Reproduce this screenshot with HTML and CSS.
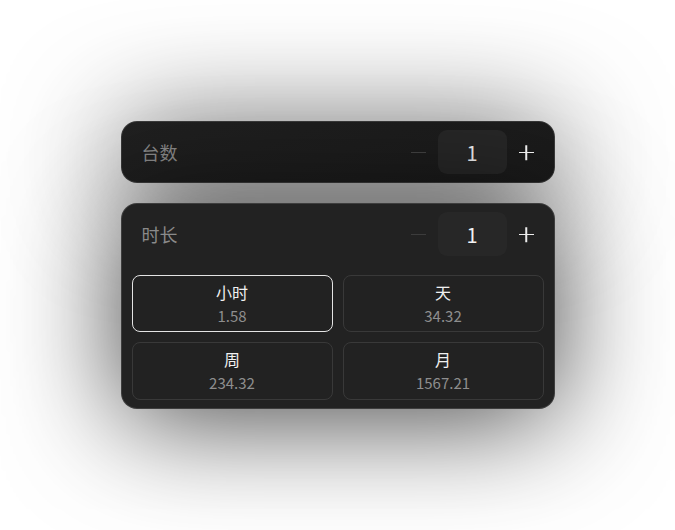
FILE: index.html
```html
<!DOCTYPE html>
<html lang="zh-CN">
<head>
<meta charset="utf-8">
<title>时长选择</title>
<link rel="stylesheet" href="styles.css">
</head>
<body>
<main class="stack">
  <section class="card card-count">
    <div class="row">
      <span class="label">台数</span>
      <div class="stepper">
        <span class="btn minus" aria-label="减少"></span>
        <span class="value">1</span>
        <span class="btn plus" aria-label="增加"></span>
      </div>
    </div>
  </section>
  <section class="card card-duration">
    <div class="row">
      <span class="label">时长</span>
      <div class="stepper">
        <span class="btn minus" aria-label="减少"></span>
        <span class="value">1</span>
        <span class="btn plus" aria-label="增加"></span>
      </div>
    </div>
    <div class="options">
      <div class="option selected"><span class="opt-title">小时</span><span class="opt-price">1.58</span></div>
      <div class="option"><span class="opt-title">天</span><span class="opt-price">34.32</span></div>
      <div class="option"><span class="opt-title">周</span><span class="opt-price">234.32</span></div>
      <div class="option"><span class="opt-title">月</span><span class="opt-price">1567.21</span></div>
    </div>
  </section>
</main>
</body>
</html>
```

FILE: styles.css
```css
html, body {
  margin: 0;
  height: 100%;
  background: #ffffff;
}
body {
  display: flex;
  align-items: center;
  justify-content: center;
  font-family: "Noto Sans CJK SC", "Noto Sans", sans-serif;
}
.stack {
  width: 434px;
  display: flex;
  flex-direction: column;
  gap: 20px;
}
.card {
  box-sizing: border-box;
  border-radius: 16px;
  border: 1px solid rgba(255, 255, 255, 0.13);
  box-shadow: 0 10px 115px rgba(0, 0, 0, 0.75);
}
.card-count {
  background: linear-gradient(160deg, #202020, #1a1a1a);
  padding: 8px 20px;
}
.card-duration {
  background: #222222;
  padding: 8px 10px;
}
.card-duration .row {
  padding: 0 10px;
}
.row {
  display: flex;
  align-items: center;
  height: 44px;
}
.label {
  flex: 1;
  font-size: 18px;
  color: #8a8a8a;
  line-height: 1;
}
.stepper {
  display: flex;
  align-items: center;
  gap: 12px;
}
.btn {
  position: relative;
  width: 15px;
  height: 15px;
}
.btn::before,
.btn::after {
  content: "";
  position: absolute;
  left: 0;
  top: 7px;
  width: 15px;
  height: 1.5px;
}
.minus::before {
  background: #3c3c3c;
}
.plus::before,
.plus::after {
  background: #ececec;
}
.plus::after {
  transform: rotate(90deg);
}
.value {
  width: 69px;
  height: 44px;
  border-radius: 9px;
  background: #272727;
  color: #f2f2f2;
  font-size: 20px;
  display: flex;
  align-items: center;
  justify-content: center;
}
.options {
  margin-top: 19px;
  display: grid;
  grid-template-columns: 1fr 1fr;
  gap: 10px;
}
.option {
  box-sizing: border-box;
  height: 57px;
  border-radius: 8px;
  border: 1px solid #393939;
  display: flex;
  flex-direction: column;
  align-items: center;
  justify-content: center;
}
.option:nth-child(n+3) {
  height: 58px;
}
.option.selected {
  border: 1.5px solid #e4e4e4;
}
.opt-title {
  font-size: 16px;
  line-height: 23px;
  color: #f0f0f0;
}
.opt-price {
  font-size: 15px;
  line-height: 23px;
  color: #8e8e8e;
}
```
